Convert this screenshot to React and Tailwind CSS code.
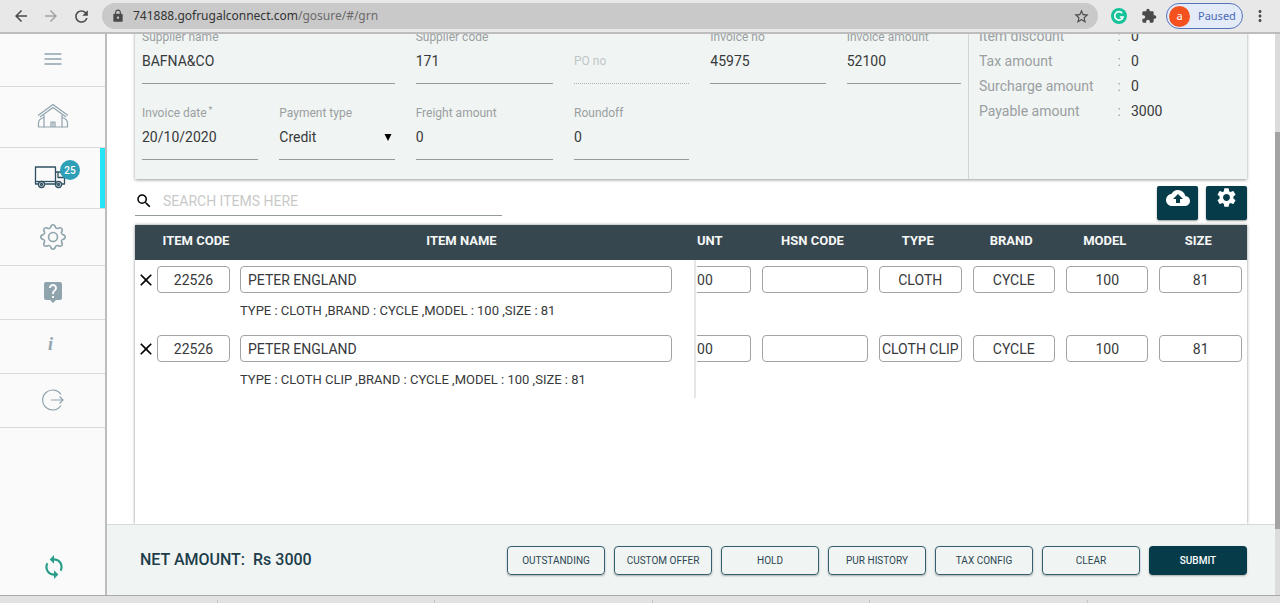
// ============================================================
// GRN Entry Page
// Goods received note: supplier header, item grid, action bar.
// ============================================================

import { BsGear } from 'react-icons/bs';
import {
  MdArrowBack,
  MdArrowForward,
  MdClose,
  MdCloudUpload,
  MdExtension,
  MdLiveHelp,
  MdLock,
  MdMoreVert,
  MdRefresh,
  MdSearch,
  MdSettings,
  MdStarBorder,
  MdSync,
} from 'react-icons/md';

const totals = [
  { label: 'Item discount', value: '0' },
  { label: 'Tax amount', value: '0' },
  { label: 'Surcharge amount', value: '0' },
  { label: 'Payable amount', value: '3000' },
];

const items = [
  { code: '22526', name: 'PETER ENGLAND', amount: '00', hsn: '', type: 'CLOTH', brand: 'CYCLE', model: '100', size: '81' },
  { code: '22526', name: 'PETER ENGLAND', amount: '00', hsn: '', type: 'CLOTH CLIP', brand: 'CYCLE', model: '100', size: '81' },
];

const actions = ['OUTSTANDING', 'CUSTOM OFFER', 'HOLD', 'PUR HISTORY', 'TAX CONFIG', 'CLEAR'];

const HouseIcon = () => (
  <svg width="32" height="26" viewBox="0 0 32 26" fill="none" stroke="currentColor" strokeWidth="1.2" strokeLinejoin="round">
    <path d="M1 12.5 16 1.5l15 11" />
    <path d="M3 14 16 4.5 29 14" />
    <path d="M7 12v12h18V12" />
    <path d="M7 14.5c-3.5 1-5.5 3-5.5 5.5v4H7M25 14.5c3.5 1 5.5 3 5.5 5.5v4H25" />
    <path d="M14 24v-5h4v5M16 19v5" />
  </svg>
);

const TruckIcon = () => (
  <svg width="32" height="24" viewBox="0 0 32 24" fill="none" stroke="currentColor" strokeWidth="1.3" strokeLinejoin="round">
    <path d="M4.5 19H1.5V2h20v17H10.5" />
    <path d="M21.5 7h5l4 5.5V19h-3M21.5 19h1M24 7v5.5h6.5" />
    <path d="M1.5 16.5h20" />
    <circle cx="7.5" cy="19.5" r="3" />
    <circle cx="7.5" cy="19.5" r="1" />
    <circle cx="24.5" cy="19.5" r="3" />
    <circle cx="24.5" cy="19.5" r="1" />
  </svg>
);

const ExitIcon = () => (
  <svg width="22" height="22" viewBox="0 0 22 22" fill="none" stroke="currentColor" strokeWidth="1.2">
    <path d="M19 5.5A10 10 0 1 0 19 16.5" />
    <path d="M9 11h12M17.5 7.5 21 11l-3.5 3.5" />
  </svg>
);

const MenuIcon = () => (
  <svg width="18" height="14" viewBox="0 0 18 14" stroke="currentColor" strokeWidth="1.5">
    <path d="M0.5 2h17M0.5 7h17M0.5 12h17" />
  </svg>
);

function BrowserBar() {
  return (
    <header className="flex h-[34px] shrink-0 items-center border-b-2 border-[#bdbdbd] bg-[#e8e8e8] text-[#4a4a4a]">
      <nav className="flex w-[102px] items-center gap-3 pl-3">
        <button aria-label="Back"><MdArrowBack size={18} /></button>
        <button aria-label="Forward" className="text-[#a3a3a3]"><MdArrowForward size={18} /></button>
        <button aria-label="Reload"><MdRefresh size={19} /></button>
      </nav>
      <div className="flex h-[26px] flex-1 items-center rounded-full bg-[#c9c9c9] px-2">
        <MdLock size={14} className="mx-px shrink-0" />
        <p className="ml-[7px] flex-1 font-['Noto_Sans',sans-serif] text-xs text-[#333]">
          741888.gofrugalconnect.com<span className="text-[#6b6b6b]">/gosure/#/grn</span>
        </p>
        <button aria-label="Bookmark"><MdStarBorder size={17} /></button>
      </div>
      <div className="flex items-center pr-[3px] pl-[13px]">
        <svg width="16" height="16" viewBox="0 0 16 16" fill="none" stroke="#fff" strokeWidth="1.6">
          <circle cx="8" cy="8" r="8" fill="#15c39a" stroke="none" />
          <path d="M11.2 5.2A4.2 4.2 0 1 0 12 9H8.8M12 9l-1 2.5" />
        </svg>
        <MdExtension size={16} className="ml-[14px]" />
        <button className="ml-[9px] flex h-[26px] w-[77px] items-center gap-2 rounded-full border border-[#5576bd] bg-[#e3eaf8] pl-[2px] font-['Noto_Sans',sans-serif] text-[11px] text-[#4a69b5]">
          <span className="flex size-[21px] items-center justify-center rounded-full bg-[#f4511e] text-white">a</span>
          Paused
        </button>
        <button aria-label="Menu" className="mx-2"><MdMoreVert size={18} /></button>
      </div>
    </header>
  );
}

function SideItem({ label, className, children }) {
  return (
    <a href="#" aria-label={label} className={`relative flex items-center justify-center border-b border-[#dadada] ${className}`}>
      {children}
    </a>
  );
}

function Sidebar() {
  return (
    <nav className="flex w-[107px] shrink-0 flex-col border-r-2 border-[#bdbdbd] bg-[#fafafa] text-[#90a4ae]">
      <SideItem label="Menu" className="h-[53px] pb-[2px]"><MenuIcon /></SideItem>
      <SideItem label="Home" className="h-[61px] pb-[2px]"><HouseIcon /></SideItem>
      <SideItem label="Inward" className="h-[61px] pr-[6px] pb-[2px] text-[#2f5061]">
        <TruckIcon />
        <span className="absolute top-3 left-[60px] flex size-5 items-center justify-center rounded-full bg-[#2f9fb8] text-[10px] font-medium text-white">25</span>
        <span className="absolute inset-y-0 right-0 w-[5px] bg-[#26e4f5]" />
      </SideItem>
      <SideItem label="Settings" className="h-[57px]"><BsGear size={26} /></SideItem>
      <SideItem label="Help" className="h-[54px] pb-[2px]"><MdLiveHelp size={24} /></SideItem>
      <SideItem label="About" className="h-[54px] pr-1 pb-[6px]">
        <span className="font-['Liberation_Serif',serif] text-lg font-bold italic">i</span>
      </SideItem>
      <SideItem label="Log out" className="h-[54px] pb-[2px]"><ExitIcon /></SideItem>
      <button aria-label="Sync" className="mt-auto mb-[15px] ml-[41px] self-start text-[#2a9d8a]">
        <MdSync size={26} />
      </button>
    </nav>
  );
}

function Field({ id, label, value, required, className = '' }) {
  return (
    <div className={className}>
      <label htmlFor={id} className="block h-4 text-xs leading-4 text-[#9a9fa1]">
        {label}
        {required && <sup className="ml-[2px]">*</sup>}
      </label>
      <input id={id} defaultValue={value} className="mt-1 block h-[35px] w-full border-b border-[#929a9b] bg-transparent pb-[10px] text-sm" />
    </div>
  );
}

function SupplierForm() {
  return (
    <section className="-mt-4 flex bg-[#f0f4f3] shadow-[0_1px_3px_rgba(0,0,0,0.4)]">
      <form className="grid flex-1 grid-cols-[116fr_115fr_137fr_115fr_115fr_114fr] gap-[21px] border-r border-[#d0d5d5] px-[7px] pt-[11px] pb-[19px]">
        <Field id="supplier" label="Supplier name" value="BAFNA&CO" className="col-span-2" />
        <Field id="supplierCode" label="Supplier code" value="171" />
        <div>
          <label htmlFor="poNo" className="sr-only">PO number</label>
          <input
            id="poNo"
            disabled
            placeholder="PO no"
            className="mt-5 block h-[35px] w-full border-b border-dotted border-[#a9b0b0] pb-[10px] text-xs placeholder:text-[#c0c6c6]"
          />
        </div>
        <Field id="invoiceNo" label="Invoice no" value="45975" />
        <Field id="invoiceAmount" label="Invoice amount" value="52100" />
        <Field id="invoiceDate" label="Invoice date" value="20/10/2020" required />
        <div>
          <label htmlFor="paymentType" className="block h-4 text-xs leading-4 text-[#9a9fa1]">Payment type</label>
          <div className="relative mt-1">
            <select id="paymentType" className="block h-[35px] w-full appearance-none border-b border-[#929a9b] bg-transparent pb-[10px] text-sm">
              <option>Credit</option>
            </select>
            <svg className="pointer-events-none absolute top-[9px] right-[3px]" width="8" height="7" viewBox="0 0 8 7">
              <path d="M0.5 0h7L4 7z" fill="#000" />
            </svg>
          </div>
        </div>
        <Field id="freight" label="Freight amount" value="0" />
        <Field id="roundoff" label="Roundoff" value="0" />
      </form>
      <dl className="w-1/4 px-[10px] pt-[6px] text-sm leading-[25px]">
        {totals.map(({ label, value }) => (
          <div key={label} className="flex">
            <dt className="flex w-[152px] justify-between pr-[10px] text-[#9a9fa1]">
              {label}
              <span>:</span>
            </dt>
            <dd>{value}</dd>
          </div>
        ))}
      </dl>
    </section>
  );
}

function SearchRow() {
  return (
    <div className="mt-[7px] mb-[5px] flex h-[34px] items-start justify-between">
      <label className="flex h-[30px] w-[33%] items-center border-b border-[#929a9b]">
        <MdSearch size={18} className="shrink-0 text-black" />
        <input
          aria-label="Search items"
          placeholder="SEARCH ITEMS HERE"
          className="ml-[10px] w-full text-sm outline-none placeholder:text-[#c9c9c9]"
        />
      </label>
      <div className="flex gap-2 text-white">
        <button aria-label="Upload" className="flex h-[34px] w-[41px] justify-center rounded-xs bg-[#063c4a] shadow-[0_1px_2px_rgba(0,0,0,0.4)]">
          <MdCloudUpload size={24} />
        </button>
        <button aria-label="Grid settings" className="flex h-[34px] w-[41px] justify-center rounded-xs bg-[#063c4a] shadow-[0_1px_2px_rgba(0,0,0,0.4)]">
          <MdSettings size={23} />
        </button>
      </div>
    </div>
  );
}

function CellInput({ label, value, className = 'rounded border text-center' }) {
  return <input aria-label={label} defaultValue={value} className={`block h-[27px] w-full border-[#a3a3a3] bg-white text-sm ${className}`} />;
}

// Code and name stay put while the other columns scroll
function FrozenColumns() {
  return (
    <table className="w-full table-fixed border-separate border-spacing-0">
      <colgroup>
        <col className="w-[22px]" />
        <col className="w-[78px]" />
        <col />
      </colgroup>
      <thead className="bg-[#37474f] text-[13px] text-[#f5f7f7]">
        <tr className="h-[35px]">
          <th aria-label="Remove" />
          <th className="pb-1 font-bold">ITEM CODE</th>
          <th className="pr-2 pb-1 font-bold">ITEM NAME</th>
        </tr>
      </thead>
      <tbody>
        {items.map((item, i) => (
          <tr key={i} className="h-[69px] align-top">
            <td className="pt-[10px] pl-px">
              <button aria-label="Remove item" className="block text-black"><MdClose size={20} /></button>
            </td>
            <td className="pt-[6px] pr-[5px]"><CellInput label="Item code" value={item.code} /></td>
            <td className="border-r-2 border-[#e6e6e6] pt-[6px] pr-[22px] pl-[5px]">
              <CellInput label="Item name" value={item.name} className="rounded border px-[7px]" />
              <p className="mt-2 text-[13px] leading-5">
                TYPE : {item.type} ,BRAND : {item.brand} ,MODEL : {item.model} ,SIZE : {item.size}
              </p>
            </td>
          </tr>
        ))}
      </tbody>
    </table>
  );
}

function ScrollColumns() {
  return (
    <table className="w-full table-fixed border-separate border-spacing-0">
      <colgroup>
        <col className="w-[60px]" />
        <col className="w-[117px]" />
        <col span={4} />
      </colgroup>
      <thead className="bg-[#37474f] text-[13px] text-[#f5f7f7]">
        <tr className="h-[35px]">
          <th className="pb-1 pl-px text-left font-bold">UNT</th>
          {['HSN CODE', 'TYPE', 'BRAND', 'MODEL', 'SIZE'].map((title) => (
            <th key={title} className="pr-1 pb-1 font-bold">{title}</th>
          ))}
        </tr>
      </thead>
      <tbody>
        {items.map((item, i) => (
          <tr key={i} className="h-[69px] align-top">
            <td className="pt-[6px] pr-[5px] pl-px">
              <CellInput label="Amount" value={item.amount} className="rounded-r border border-l-0" />
            </td>
            {['hsn', 'type', 'brand', 'model', 'size'].map((key) => (
              <td key={key} className="pt-[6px] pr-[5px] pl-[6px]"><CellInput label={key} value={item[key]} /></td>
            ))}
          </tr>
        ))}
      </tbody>
    </table>
  );
}

function ActionBar() {
  return (
    <footer className="flex h-[71px] shrink-0 items-center justify-between border-t border-[#d5d9d9] bg-[#f0f4f3] pr-7 pl-[33px]">
      <p className="font-medium whitespace-pre text-[#1d3d4a]">NET AMOUNT:  Rs 3000</p>
      <div className="flex gap-[9px] text-[10px]">
        {actions.map((name) => (
          <button key={name} className="h-[29px] w-[98px] rounded border border-[#33606c] text-[#2c4752] shadow-[0_1px_2px_rgba(0,0,0,0.3)]">
            {name}
          </button>
        ))}
        <button className="h-[29px] w-[98px] rounded bg-[#063c4a] font-medium text-white shadow-[0_1px_2px_rgba(0,0,0,0.3)]">SUBMIT</button>
      </div>
    </footer>
  );
}

export default function App() {
  return (
    <div className="flex h-screen flex-col bg-white font-[Roboto,sans-serif] text-[#37393b]">
      <BrowserBar />
      <div className="flex min-h-0 flex-1">
        <Sidebar />
        <div className="flex min-w-0 flex-1 flex-col">
          <main className="flex min-h-0 flex-1 flex-col overflow-hidden px-7">
            <SupplierForm />
            <SearchRow />
            <section className="flex flex-1 items-start shadow-[0_0_3px_rgba(0,0,0,0.45)]">
              <div className="min-w-0 flex-[56]"><FrozenColumns /></div>
              <div className="min-w-0 flex-[55]"><ScrollColumns /></div>
            </section>
          </main>
          <ActionBar />
        </div>
        <div className="flex w-[5px] shrink-0 flex-col bg-[#dcdcdc] pt-[98px]">
          <div className="h-6/7 bg-[#a3a3a3]" />
        </div>
      </div>
      <div className="flex h-2 shrink-0 items-end border-t border-[#a9a9a9] bg-[#e2e2e2]">
        {[1, 2, 3, 4, 5].map((n) => (
          <span key={n} className="h-[3px] w-[17%] border-r border-[#c4c4c4]" />
        ))}
      </div>
    </div>
  );
}
